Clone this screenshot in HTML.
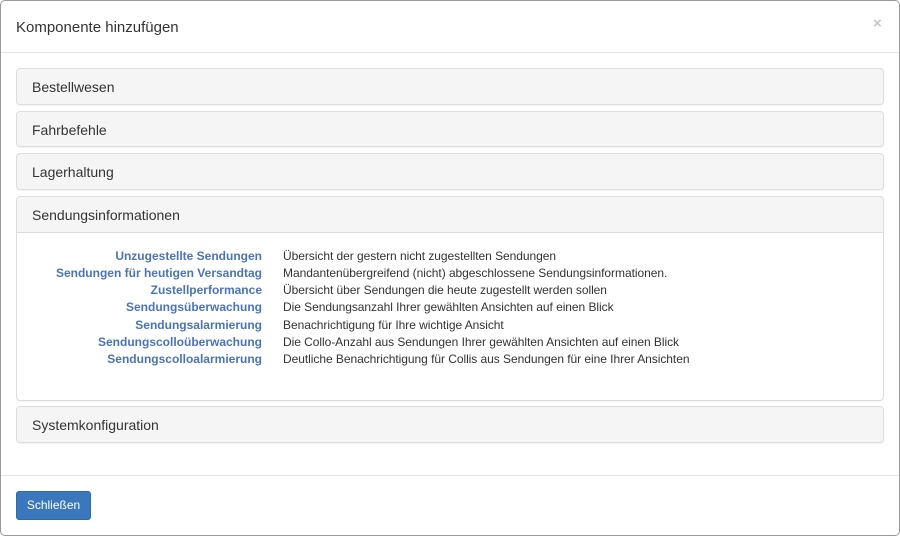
<!DOCTYPE html>
<html><head><style>
*{margin:0;padding:0;box-sizing:border-box}
body{width:900px;height:536px;background:#fff;font-family:"Liberation Sans",Arial,sans-serif;color:#333;position:relative;overflow:hidden}
.frame{position:absolute;left:0;top:0;width:900px;height:536px;border:1px solid #999;border-radius:5px}
.title{position:absolute;left:16px;top:19px;font-size:15px;color:#333}
.x{position:absolute;left:873px;top:15px;font-size:15px;color:#c4c4c4;font-weight:bold}
.hr{position:absolute;left:1px;width:898px;height:1px;background:#e5e5e5}
.panel{position:absolute;left:16px;width:868px;border:1px solid #ddd;border-radius:4px;background:#f5f5f5;box-shadow:0 1px 1px rgba(0,0,0,.05)}
.panel .h{position:absolute;left:15px;font-size:14px;color:#333}
.body{position:absolute;left:0;top:35px;width:866px;background:#fff;border-top:1px solid #ddd;border-radius:0 0 4px 4px}
.row{position:absolute;font-size:12px;line-height:17px;white-space:nowrap}
.l{position:absolute;right:621px;color:#4a74b8;font-weight:bold;text-align:right}
.d{position:absolute;left:266px;color:#333;letter-spacing:-0.05px}
.btn{position:absolute;left:16px;top:491px;width:75px;height:29px;background:#3a77bd;border:1px solid #2e6da4;border-radius:3px;color:#fff;font-size:12px;text-align:center;line-height:27px}
</style></head><body>
<div class="frame"></div>
<div class="title">Komponente hinzufügen</div>
<div class="x">×</div>
<div class="hr" style="top:52px"></div>
<div class="panel" style="top:68px;height:37px"><div class="h" style="top:10px">Bestellwesen</div></div>
<div class="panel" style="top:111px;height:36px"><div class="h" style="top:10px">Fahrbefehle</div></div>
<div class="panel" style="top:153px;height:37px"><div class="h" style="top:10px">Lagerhaltung</div></div>
<div class="panel" style="top:196px;height:205px"><div class="h" style="top:10px">Sendungsinformationen</div>
<div class="body" style="height:168px">
<div class="row" style="top:15px;left:0;width:866px;height:130px">
<div class="l" style="top:0">Unzugestellte Sendungen</div><div class="d" style="top:0">Übersicht der gestern nicht zugestellten Sendungen</div>
<div class="l" style="top:17px">Sendungen für heutigen Versandtag</div><div class="d" style="top:17px">Mandantenübergreifend (nicht) abgeschlossene Sendungsinformationen.</div>
<div class="l" style="top:34px">Zustellperformance</div><div class="d" style="top:34px">Übersicht über Sendungen die heute zugestellt werden sollen</div>
<div class="l" style="top:51px">Sendungsüberwachung</div><div class="d" style="top:51px">Die Sendungsanzahl Ihrer gewählten Ansichten auf einen Blick</div>
<div class="l" style="top:69px">Sendungsalarmierung</div><div class="d" style="top:69px">Benachrichtigung für Ihre wichtige Ansicht</div>
<div class="l" style="top:86px">Sendungscolloüberwachung</div><div class="d" style="top:86px">Die Collo-Anzahl aus Sendungen Ihrer gewählten Ansichten auf einen Blick</div>
<div class="l" style="top:103px">Sendungscolloalarmierung</div><div class="d" style="top:103px">Deutliche Benachrichtigung für Collis aus Sendungen für eine Ihrer Ansichten</div>
</div>
</div></div>
<div class="panel" style="top:406px;height:37px"><div class="h" style="top:10px">Systemkonfiguration</div></div>
<div class="hr" style="top:475px"></div>
<div class="btn">Schließen</div>
</body></html>
